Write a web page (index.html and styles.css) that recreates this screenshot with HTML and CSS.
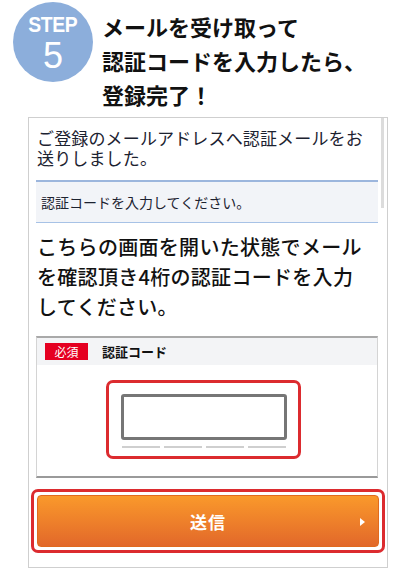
FILE: index.html
```html
<!DOCTYPE html>
<html lang="ja">
<head>
<meta charset="utf-8">
<link rel="stylesheet" href="styles.css">
</head>
<body>
<header class="step">
  <div class="badge">
    <span class="badge-label">STEP</span>
    <span class="badge-num">5</span>
  </div>
  <h1 class="step-title">メールを受け取って<br>認証コードを入力したら、<br>登録完了！</h1>
</header>
<section class="phone">
  <div class="scrollbar"></div>
  <p class="notice">ご登録のメールアドレスへ認証メールをお送りしました。</p>
  <div class="subhead">認証コードを入力してください。</div>
  <p class="lead">こちらの画面を開いた状態でメールを確認頂き4桁の認証コードを入力してください。</p>
  <div class="form">
    <div class="form-head">
      <span class="req">必須</span>
      <span class="form-label">認証コード</span>
    </div>
    <div class="form-body">
      <div class="code-outline">
        <div class="code-input"></div>
        <div class="dashes"><span></span><span></span><span></span><span></span></div>
      </div>
    </div>
  </div>
  <div class="btn-outline">
    <button class="btn">送信<span class="arrow"></span></button>
  </div>
</section>
</body>
</html>
```
FILE: styles.css
```css
html, body {
  margin: 0;
  padding: 0;
  background: #fff;
}
body {
  font-family: "Noto Sans CJK JP", "Noto Sans", sans-serif;
  color: #111;
  width: 414px;
  height: 583px;
  overflow: hidden;
}
.step {
  display: flex;
  height: 117px;
  box-sizing: border-box;
  padding: 2px 0 0 13px;
}
.badge {
  width: 80px;
  height: 80px;
  border-radius: 50%;
  background: #8caedb;
  color: #fff;
  display: flex;
  flex-direction: column;
  align-items: center;
  font-family: "Liberation Sans", Arial, sans-serif;
  flex-shrink: 0;
}
.badge-label {
  font-size: 22px;
  line-height: 22px;
  margin-top: 12px;
  font-weight: 700;
  letter-spacing: -0.5px;
  transform: scaleX(0.88);
}
.badge-num {
  font-size: 36px;
  line-height: 36px;
  margin-top: 2px;
}
.step-title {
  margin: 7px 0 0 9px;
  font-size: 22px;
  line-height: 34px;
  font-weight: 700;
  color: #111;
  letter-spacing: 0;
}
.phone {
  position: relative;
  margin-left: 28px;
  width: 360px;
  height: 451px;
  box-sizing: border-box;
  border: 1px solid #cfcfcf;
  padding: 0 9px 0 7px;
}
.scrollbar {
  position: absolute;
  right: 3px;
  top: 0;
  width: 3px;
  height: 90px;
  background: #dcdcdc;
}
.notice {
  margin: 10px 0 0;
  padding-left: 1px;
  font-size: 17px;
  line-height: 20px;
  color: #1c2230;
  letter-spacing: 0.15px;
}
.subhead {
  margin-top: 12px;
  border-top: 2px solid #9cb6dd;
  border-bottom: 1px solid #a7c2e6;
  background: #f2f4f8;
  height: 40px;
  box-sizing: content-box;
  display: flex;
  align-items: center;
  padding-left: 5px;
  font-size: 14px;
  color: #1c2230;
}
.lead {
  margin: 9px 0 0;
  padding: 0 12px 0 1px;
  font-size: 20px;
  line-height: 30px;
  font-weight: 500;
  color: #111;
  letter-spacing: 0.3px;
}
.form {
  margin-top: 14px;
  border: 1px solid #d4d4d4;
  border-top: 2px solid #a9a9a9;
  border-bottom: 2px solid #9a9a9a;
  height: 142px;
  box-sizing: border-box;
}
.form-head {
  display: flex;
  align-items: center;
  height: 27px;
  background: #f3f4f6;
  padding-left: 8px;
}
.req {
  background: #e50021;
  color: #fff;
  font-size: 12px;
  width: 43px;
  height: 17px;
  line-height: 17px;
  text-align: center;
}
.form-label {
  margin-left: 14px;
  font-size: 13px;
  font-weight: 700;
  color: #111;
}
.form-body {
  display: flex;
  justify-content: center;
  padding-top: 15px;
  padding-right: 8px;
}
.code-outline {
  width: 195px;
  height: 79px;
  box-sizing: border-box;
  border: 3px solid #dc2b2f;
  border-radius: 7px;
  padding: 11px 0 0 12px;
}
.code-input {
  width: 166px;
  height: 46px;
  box-sizing: border-box;
  border: 3px solid #767676;
  border-radius: 3px;
}
.dashes {
  display: flex;
  gap: 4px;
  margin-top: 6px;
  padding-left: 1px;
}
.dashes span {
  width: 38px;
  height: 2px;
  background: #cfcfcf;
}
.btn-outline {
  margin: 11px 0 0 -5px;
  width: 354px;
  height: 64px;
  box-sizing: border-box;
  border: 3px solid #dc2b2f;
  border-radius: 7px;
  padding: 3px;
}
.btn {
  position: relative;
  display: flex;
  align-items: center;
  justify-content: center;
  width: 342px;
  height: 52px;
  margin: 0;
  padding: 0;
  border: 1px solid #e06a1e;
  border-radius: 4px;
  background: linear-gradient(#fa992b, #e2682a);
  color: #fff;
  font-family: "Noto Sans CJK JP", sans-serif;
  font-size: 17px;
  font-weight: 700;
  letter-spacing: 1px;
}
.arrow {
  position: absolute;
  right: 13px;
  top: 22px;
  width: 0;
  height: 0;
  border-left: 5px solid #fff;
  border-top: 4px solid transparent;
  border-bottom: 4px solid transparent;
}
```
